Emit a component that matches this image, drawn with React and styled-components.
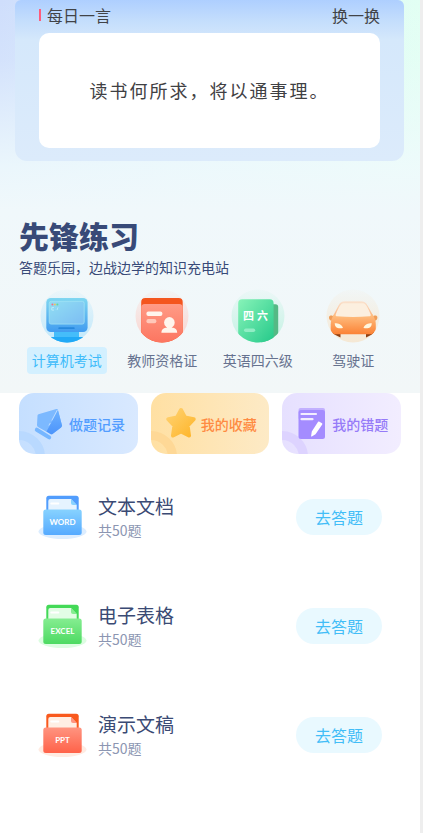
import React, { useState } from "react";
import styled, { createGlobalStyle } from "styled-components";

const GlobalStyle = createGlobalStyle`
  *, *::before { box-sizing: border-box; }
  body { margin: 0; background: #fff; }
  body, button { font-family: "Noto Sans CJK SC", "Noto Sans", sans-serif; }
  h1, h2, h3, p, ul { margin: 0; padding: 0; }
  ul { list-style: none; }
  button { border: 0; padding: 0; background: none; cursor: pointer; }
`;

const Page = styled.main`
  min-height: 100vh;
  border-right: 3px solid #eeeeee;
  background: #fff;
`;

const Hero = styled.section`
  padding: 0 16px 19px 15px;
  background:
    linear-gradient(180deg, rgba(239, 250, 252, 0) 0, rgba(239, 250, 252, 0.15) 60px, rgba(239, 250, 252, 0.85) 165px, #f0f8fb 210px, #f2f7f8 100%),
    linear-gradient(90deg, #cfdefc 0%, #dcf1fb 50%, #e2fff3 100%);
`;

const QuoteCard = styled.section`
  padding: 0 24px 13px;
  border-radius: 6px 6px 12px 12px;
  background: linear-gradient(180deg, #aecfff 0, #c3ddfc 20px, #d5e8fb 40px, #dcebfb 100%);
`;

const QuoteHeader = styled.header`
  display: flex;
  align-items: center;
  justify-content: space-between;
  height: 33px;
  padding-bottom: 3px;
  color: #414347;
`;

const QuoteHeading = styled.h2`
  display: flex;
  align-items: center;
  gap: 6px;
  font-size: 16px;
  font-weight: 400;
  line-height: 24px;

  &::before {
    content: "";
    width: 2px;
    height: 12px;
    background: #ff5c7c;
  }
`;

const SwapButton = styled.button`
  color: inherit;
  font-size: 16px;
  line-height: 24px;
`;

const Quote = styled.p`
  padding: 44px 16px;
  border-radius: 10px;
  background: #fff;
  color: #3f4043;
  font-size: 18px;
  line-height: 27px;
  letter-spacing: 2px;
  text-align: center;
  white-space: nowrap;
`;

const Intro = styled.header`
  display: grid;
  gap: 4px;
  margin-top: 56px;
  padding-left: 4px;
  color: #384a78;
`;

const Title = styled.h1`
  font-size: 30px;
  font-weight: 900;
  line-height: 36px;
`;

const Subtitle = styled.p`
  font-size: 14px;
  line-height: 20px;
`;

const Tabs = styled.nav`
  display: grid;
  grid-template-columns: repeat(4, 1fr);
  margin: 12px 3px 0 4px;
`;

const Tab = styled.button`
  display: flex;
  flex-direction: column;
  align-items: center;
  gap: 4px;
`;

const TabLabel = styled.span`
  padding: 0 5px;
  border-radius: 4px;
  background: ${(p) => (p.$active ? "#d3f0ff" : "transparent")};
  color: ${(p) => (p.$active ? "#3dbbfa" : "#66728f")};
  font-size: 14px;
  line-height: 27px;
  white-space: nowrap;
`;

const Shortcuts = styled.nav`
  display: grid;
  grid-template-columns: repeat(3, 1fr);
  gap: 13px;
  padding: 0 19px;
`;

const Shortcut = styled.button`
  position: relative;
  display: flex;
  align-items: center;
  gap: 3px;
  height: 61px;
  padding-left: 15px;
  overflow: hidden;
  border-radius: 15px;
  background: ${(p) => p.$fill};
  color: ${(p) => p.$color};
  font-size: 14px;
  font-weight: 500;
  white-space: nowrap;

  svg { flex: none; position: relative; }

  &::before {
    content: "";
    position: absolute;
    left: -26px;
    bottom: -29px;
    width: 52px;
    height: 52px;
    border: 9px solid ${(p) => p.$ring};
    border-radius: 50%;
  }
`;

const List = styled.ul`
  padding: 8px 38px 40px;
`;

const Row = styled.li`
  display: flex;
  align-items: center;
  gap: 10px;
  height: 109px;
`;

const RowText = styled.div`
  flex: 1;
`;

const RowTitle = styled.h3`
  color: #3a4a74;
  font-size: 19px;
  font-weight: 400;
  line-height: 26px;
`;

const RowCount = styled.p`
  color: #8c96b2;
  font-size: 14px;
  line-height: 22px;
`;

const StartButton = styled.button`
  width: 86px;
  height: 36px;
  border-radius: 18px;
  background: #e9f9ff;
  color: #42bdf7;
  font-size: 16px;
`;

const SvgLabel = styled.text`
  fill: #fff;
  font-family: ${(p) => (p.$cjk ? '"Noto Sans CJK SC", sans-serif' : 'Lato, "Noto Sans", sans-serif')};
  font-size: ${(p) => (p.$cjk ? "11px" : "8px")};
  font-weight: 700;
`;

function Gradient({ id, from, to, diagonal }) {
  return (
    <linearGradient id={id} x1="0" y1="0" x2={diagonal ? "1" : "0"} y2="1">
      <stop stopColor={from} />
      <stop offset="1" stopColor={to} />
    </linearGradient>
  );
}

function Disc({ id, color, opacity = 1, children }) {
  return (
    <svg width="54" height="54" viewBox="0 0 54 54" aria-hidden="true">
      <defs>
        <clipPath id={`${id}-clip`}><circle cx="27" cy="27" r="26.5" /></clipPath>
        <linearGradient id={`${id}-disc`} x1="0" y1="0" x2="0" y2="1">
          <stop stopColor={color} stopOpacity="0.1" />
          <stop offset="1" stopColor={color} stopOpacity={opacity} />
        </linearGradient>
      </defs>
      <circle cx="27" cy="27" r="26.5" fill={`url(#${id}-disc)`} />
      <g clipPath={`url(#${id}-clip)`}>{children}</g>
    </svg>
  );
}

function ComputerIcon() {
  return (
    <Disc id="pc" color="#bfe8fb">
      <defs>
        <Gradient id="pc-body" from="#80d7f1" to="#419cf0" />
        <Gradient id="pc-screen" from="#91def3" to="#7cbdf3" diagonal />
      </defs>
      <path d="M14 42h25v6h5v6H10v-6h4z" fill="#45bdfa" />
      <path d="M9 48h36v6H9z" fill="#21a9f6" />
      <rect x="6.3" y="9" width="41.3" height="34" rx="4.5" fill="url(#pc-body)" />
      <rect x="9.2" y="12.3" width="35" height="22.8" rx="2" fill="url(#pc-screen)" stroke="#a6e5f7" strokeWidth=".7" />
      <circle cx="12.4" cy="15.6" r="1" fill="#f0738b" />
      <circle cx="14.9" cy="15.6" r="1" fill="#f0c462" />
      <circle cx="17.4" cy="15.6" r="1" fill="#66d79c" />
      <path d="M14 18.6h-2.2v2.5H14M15.4 18.7v.2M15.4 20.8v.2M18 18.3l-1 2.8" fill="none" stroke="#c4f0fb" strokeWidth=".8" />
      <rect x="18.3" y="38.3" width="16.4" height="1.8" rx=".9" fill="#2788dc" />
    </Disc>
  );
}

function TeacherIcon() {
  return (
    <Disc id="tc" color="#fbd3cd">
      <defs><Gradient id="tc-card" from="#ff9b86" to="#fc7560" /></defs>
      <path d="M6.2 54V13a4 4 0 0 1 4-4h33.5a4 4 0 0 1 4 4v41z" fill="#f4551d" />
      <path d="M6.2 54V18.5a3.5 3.5 0 0 1 3.5-3.5h34.5a3.5 3.5 0 0 1 3.5 3.5V54z" fill="url(#tc-card)" />
      <rect x="11.4" y="22.6" width="16" height="4.4" rx="2" fill="#fff5ed" />
      <rect x="11.4" y="30" width="10" height="4.2" rx="2" fill="#ffc8b9" />
      <circle cx="34.4" cy="33.4" r="5.3" fill="#fff5ed" />
      <path d="M26.4 43.8c0-3.6 2.2-4.8 5.6-5.4v-2h4.8v2c3.4.6 5.4 1.8 5.4 5.4z" fill="#fff5ed" />
    </Disc>
  );
}

function EnglishIcon() {
  return (
    <Disc id="en" color="#c3f2e3">
      <defs><Gradient id="en-book" from="#87f3b8" to="#25c98a" diagonal /></defs>
      <path d="M30 15.3h14.5a2.7 2.7 0 0 1 2.7 2.7v36H30z" fill="#55b985" />
      <path d="M7.2 54V14.3a4 4 0 0 1 4-4h27.4a4 4 0 0 1 4 4V54z" fill="url(#en-book)" />
      <SvgLabel $cjk x="12" y="31">四</SvgLabel>
      <SvgLabel $cjk x="26" y="31">六</SvgLabel>
      <rect x="13" y="39.6" width="11.2" height="3.4" rx="1.7" fill="#91edc5" />
    </Disc>
  );
}

function CarIcon() {
  return (
    <Disc id="car" color="#f5e8d4">
      <defs>
        <Gradient id="car-roof" from="#fae3d0" to="#fcb17a" />
        <Gradient id="car-body" from="#ffc184" to="#fb8235" />
      </defs>
      <path d="M6.500 42h8v6.500l-8-4zM48 42h-8v6.500l8-4z" fill="#8e3f12" />
      <path d="M6.500 28 12.500 16.500c1.500-3 3.500-4.200 6.500-4.200h16c3 0 5 1.200 6.500 4.200L48 28z" fill="url(#car-roof)" />
      <path d="M3 28.200c0-2.200 3.800-2.300 4.200-.5l-.7 4C4.200 32 3 30.500 3 28.200zM51.400 28.200c0-2.200-3.800-2.300-4.200-.5l.7 4c2.300.3 3.500-1.200 3.500-3.500z" fill="#ef9d58" />
      <path d="M8 25.500h38.500c2.300 3.500 3.300 6.500 3.300 10V42c0 2-1.300 3.200-3.300 3.200H8c-2 0-3.300-1.200-3.300-3.200v-6.500c0-3.500 1-6.500 3.300-10z" fill="url(#car-body)" />
      <path d="M9.700 25.500c1.500-3.800 3-7 5-9.700 1-1.300 2-1.600 3.500-1.600h18c1.500 0 2.500.3 3.500 1.600 2 2.700 3.500 5.900 5 9.700.4 1.200-.3 1.700-1.500 1.800-10.500 1-21.500 1-32 0-1.200-.1-1.900-.6-1.500-1.800z" fill="#fcefdf" />
      <path d="M8.700 34.300c4 0 7.200 1.200 8.300 4.700-4.300.8-8 .5-8.300-4.700zM45.800 34.300c-4 0-7.200 1.200-8.300 4.700 4.300.8 8 .5 8.300-4.700z" fill="#fff7df" />
    </Disc>
  );
}

function PenIcon() {
  return (
    <svg width="32" height="34" viewBox="0 0 32 34" aria-hidden="true">
      <defs><Gradient id="pen" from="#6eb2ff" to="#4c94fb" /></defs>
      <path d="M4.500 7.200 22.300 2Q23.900 1.700 24 3.200L28 18.500Q28 19.700 27 20.500L18.500 27Q17.500 27.500 16.500 27L4 20Q2.900 19.200 3 18L3.500 8.500Q3.600 7.500 4.500 7.200z" fill="#7cb9ff" />
      <path d="M24 3.200 28 18.500Q28 19.700 27 20.500L18.500 27Q17.500 27.500 16.500 27L12.500 24.500z" fill="url(#pen)" />
      <path d="m23.300 3-5.500 10.500M16.300 16l-1.500 2.500" stroke="#bbdbff" strokeWidth="1" />
      <path d="m2.800 22.700 12.400 7.700" stroke="#76b6ff" strokeWidth="4" strokeLinecap="round" />
    </svg>
  );
}

function StarIcon() {
  return (
    <svg width="32" height="34" viewBox="0 0 32 34" aria-hidden="true">
      <defs><Gradient id="star" from="#ffd170" to="#feb62b" diagonal /></defs>
      <path d="m15 3 4 7.500 8.700 1.600-6.100 6.500 1.400 9.900-8-4-8 4 1.400-9.900-6.100-6.500L11 10.500z" fill="url(#star)" stroke="url(#star)" strokeWidth="4" strokeLinejoin="round" />
    </svg>
  );
}

function NoteIcon() {
  return (
    <svg width="32" height="34" viewBox="0 0 32 34" aria-hidden="true">
      <rect x="1.500" y="1" width="26.500" height="12" rx="2" fill="#c2b0ff" />
      <rect x="1.500" y="3" width="26.500" height="29" rx="2.500" fill="#a48cff" />
      <path d="M4.500 7h14.500M4.500 12.200h11" stroke="#f2edff" strokeWidth="2.200" strokeLinecap="round" />
      <path d="m22 14.500 3 1.800q.6.400.2 1.200l-6.700 9.800-3.700 2.200q-.8.300-.7-.6l.7-4.400 6.300-9.700q.4-.6.900-.3z" fill="#fff" />
    </svg>
  );
}

function FolderIcon({ id, label, back, light, dark, shade, paper }) {
  return (
    <svg width="50" height="48" viewBox="0 0 50 48" aria-hidden="true">
      <defs><Gradient id={id} from={light} to={dark} /></defs>
      <ellipse cx="24.500" cy="38.500" rx="24" ry="7.500" fill={shade} />
      <rect x="8.300" y="2.700" width="32.400" height="25" rx="2.500" fill={back} />
      <path d="M12.300 6H33l5.700 6v12H10.300V8q0-2 2-2z" fill={paper} />
      <path d="M33 6v4q0 2 2 2h3.700z" fill={light} />
      <rect x="12.300" y="9.500" width="9" height="2" rx="1" fill="#fff" />
      <rect x="5.300" y="16.500" width="38.400" height="25.500" rx="2.500" fill={`url(#${id})`} />
      <SvgLabel x="24.500" y="32.300" textAnchor="middle">{label}</SvgLabel>
    </svg>
  );
}

const exams = [
  { label: "计算机考试", Icon: ComputerIcon },
  { label: "教师资格证", Icon: TeacherIcon },
  { label: "英语四六级", Icon: EnglishIcon },
  { label: "驾驶证", Icon: CarIcon },
];

const shortcuts = [
  { label: "做题记录", Icon: PenIcon, color: "#529dff", ring: "#b9d9ff", fill: "linear-gradient(90deg, #c5dfff, #d9e9ff)" },
  { label: "我的收藏", Icon: StarIcon, color: "#ff8b42", ring: "#fed896", fill: "linear-gradient(90deg, #ffe0a3, #fdeac6)" },
  { label: "我的错题", Icon: NoteIcon, color: "#967bf8", ring: "#ddd3ff", fill: "linear-gradient(90deg, #e6e0ff, #f2edff)" },
];

const topics = [
  { title: "文本文档", label: "WORD", back: "#519dfd", light: "#87d2ff", dark: "#55aaff", shade: "#dcedff", paper: "#e5f3ff" },
  { title: "电子表格", label: "EXCEL", back: "#43d957", light: "#85ed91", dark: "#4dda62", shade: "#ddfde2", paper: "#e2fde5" },
  { title: "演示文稿", label: "PPT", back: "#f9591d", light: "#ff9480", dark: "#ff6249", shade: "#ffebe2", paper: "#ffeee4" },
];

export default function App() {
  const [active, setActive] = useState(0);
  return (
    <>
      <GlobalStyle />
      <Page>
        <Hero>
          <QuoteCard>
            <QuoteHeader>
              <QuoteHeading>每日一言</QuoteHeading>
              <SwapButton type="button">换一换</SwapButton>
            </QuoteHeader>
            <Quote>读书何所求，将以通事理。</Quote>
          </QuoteCard>
          <Intro>
            <Title>先锋练习</Title>
            <Subtitle>答题乐园，边战边学的知识充电站</Subtitle>
          </Intro>
          <Tabs>
            {exams.map(({ label, Icon }, i) => (
              <Tab key={label} type="button" aria-pressed={i === active} onClick={() => setActive(i)}>
                <Icon />
                <TabLabel $active={i === active}>{label}</TabLabel>
              </Tab>
            ))}
          </Tabs>
        </Hero>
        <Shortcuts>
          {shortcuts.map(({ label, Icon, color, ring, fill }) => (
            <Shortcut key={label} type="button" $color={color} $ring={ring} $fill={fill}>
              <Icon />
              {label}
            </Shortcut>
          ))}
        </Shortcuts>
        <List>
          {topics.map(({ title, ...icon }) => (
            <Row key={title}>
              <FolderIcon id={`folder-${icon.label}`} {...icon} />
              <RowText>
                <RowTitle>{title}</RowTitle>
                <RowCount>共50题</RowCount>
              </RowText>
              <StartButton type="button">去答题</StartButton>
            </Row>
          ))}
        </List>
      </Page>
    </>
  );
}
